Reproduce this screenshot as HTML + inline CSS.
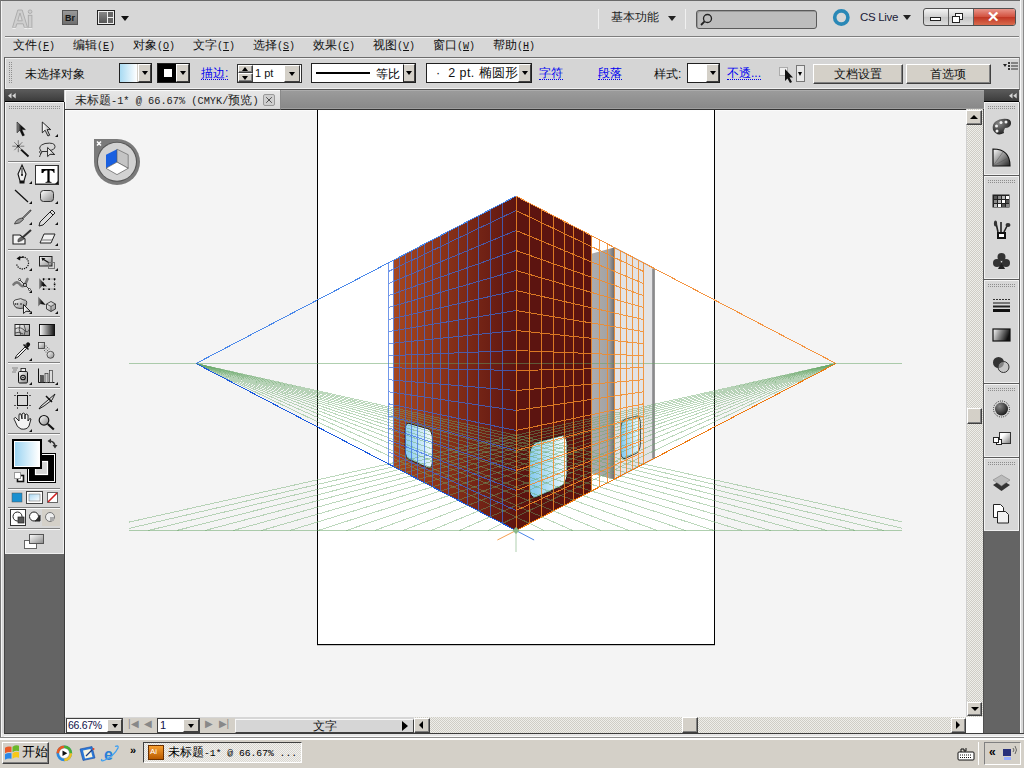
<!DOCTYPE html><html><head><meta charset="utf-8"><style>
*{box-sizing:border-box}
body{margin:0;width:1024px;height:768px;overflow:hidden;position:relative;background:#d5d5d5;font-family:"Liberation Sans",sans-serif;font-size:12px;color:#000}
.a{position:absolute}
.t{position:absolute;white-space:nowrap;line-height:1}
.lnk{color:#0000f0;border-bottom:1px dotted #0000f0}
.btn3{background:#d4d0c8;border:1px solid;border-color:#fff #404040 #404040 #fff;box-shadow:inset -1px -1px #808080}
.dd{position:absolute;background:#d4d0c8;border:1px solid;border-color:#fff #404040 #404040 #fff}
.dd:after{content:"";position:absolute;left:50%;top:50%;margin:-2px 0 0 -3px;border:3px solid transparent;border-top:4px solid #000;border-bottom:0}
.grip{position:absolute;height:4px;background:conic-gradient(#8e8e8e 25%,transparent 0) 0 0/2px 2px}
.sep{position:absolute;height:2px;background:#808080;border-bottom:1px solid #fafafa}
</style></head><body>
<div class="a" style="left:0;top:0;width:1024px;height:739px;background:#d7d7d7;border-top:1px solid #6a6a6a;border-left:1px solid #7a7a7a;box-shadow:inset 1px 0 #f4f4f4"></div><div class="a" style="left:4px;top:57px;width:1px;height:677px;background:#444"></div><div class="a" style="left:1020px;top:0;width:4px;height:739px;background:#d8d8d8;border-left:1px solid #f8f8f8;border-right:1px solid #8a8a8a"></div><svg class="a" style="left:0;top:0" width="40" height="32"><path d="M12.5 27.5L17.8 10H22.2L27.5 27.5H24.3L23.2 23.8H16.8L15.7 27.5ZM17.7 20.8H22.3L20 13Z" fill="#cecece" stroke="#a9a9a9" stroke-width="0.9" fill-rule="evenodd"/><rect x="28.3" y="15.3" width="3.6" height="12.2" fill="#cecece" stroke="#a9a9a9" stroke-width="0.9"/><rect x="28.3" y="10" width="3.6" height="3.4" rx="1.6" fill="#cecece" stroke="#a9a9a9" stroke-width="0.9"/><path d="M12.5 28.3H15.7M24.3 28.3H27.5M28.3 28.3H31.9" stroke="#f4f4f4"/></svg><div class="a" style="left:62px;top:10px;width:16px;height:15px;background:linear-gradient(#9a9a9a,#6e6e6e);border:1px solid #555"></div><div class="t" style="left:65px;top:13.5px;font-size:9px;font-weight:bold;color:#151515">Br</div><div class="a" style="left:97px;top:10px;width:18px;height:15px;border:1px solid #222;background:#eee"></div><div class="a" style="left:99px;top:12px;width:8px;height:11px;background:linear-gradient(#888,#555)"></div><div class="a" style="left:108px;top:12px;width:5px;height:5px;background:#666"></div><div class="a" style="left:108px;top:18px;width:5px;height:5px;background:#666"></div><div class="a" style="left:121px;top:16px;border:4px solid transparent;border-top:5px solid #111;border-bottom:0"></div><div class="a" style="left:598px;top:9px;width:1px;height:20px;background:#a0a0a0;border-right:1px solid #f0f0f0"></div><div class="t" style="left:611px;top:11px;font-size:12px;color:#222">基本功能</div><div class="a" style="left:668px;top:16px;border:4px solid transparent;border-top:5px solid #222;border-bottom:0"></div><div class="a" style="left:685px;top:9px;width:1px;height:20px;background:#a0a0a0;border-right:1px solid #f0f0f0"></div><div class="a" style="left:696px;top:10px;width:121px;height:19px;background:#bdbdbd;border:1px solid #5a5a5a;border-radius:3px;box-shadow:inset 1px 1px #999"></div><svg class="a" style="left:698px;top:12px" width="16" height="16"><circle cx="9.5" cy="6.5" r="4" fill="none" stroke="#222" stroke-width="1.3"/><path d="M6.6 9.4L3 13" stroke="#222" stroke-width="1.8"/></svg><svg class="a" style="left:832px;top:8px" width="19" height="19"><circle cx="9.3" cy="9.5" r="6.6" fill="none" stroke="#2a88b6" stroke-width="3.6"/></svg><div class="t" style="left:860px;top:12px;font-size:11.5px;color:#202038;letter-spacing:-0.3px">CS Live</div><div class="a" style="left:903px;top:15px;border:4px solid transparent;border-top:5px solid #222;border-bottom:0"></div><div class="a" style="left:923px;top:8px;width:93px;height:18px;border:1px solid #505050;border-radius:3px;background:linear-gradient(#f4f4f4,#d0d0d0 50%,#c4c4c4 51%,#dcdcdc)"></div><div class="a" style="left:948px;top:9px;width:1px;height:16px;background:#606060"></div><div class="a" style="left:973px;top:9px;width:1px;height:16px;background:#606060"></div><div class="a" style="left:974px;top:9px;width:41px;height:16px;border-radius:0 2px 2px 0;background:linear-gradient(#e9958a,#d2503e 50%,#c03624 51%,#d86a4c)"></div><div class="a" style="left:930px;top:17px;width:11px;height:4px;background:#fff;border:1px solid #222"></div><div class="a" style="left:955px;top:13px;width:8px;height:7px;border:1px solid #222;background:#fff"></div><div class="a" style="left:952px;top:16px;width:8px;height:7px;border:1px solid #222;background:#fff"></div><div class="t" style="left:987px;top:9px;font-size:15px;font-weight:bold;color:#fff">✕</div><div class="a" style="left:5px;top:36px;width:1014px;height:2px;background:#7e7e7e;border-bottom:1px solid #f4f4f4"></div><div class="t" style="left:13px;top:39px;font-size:12px;color:#111">文件<span style="font-family:'Liberation Mono',monospace;font-size:10px">(<u>F</u>)</span></div><div class="t" style="left:73px;top:39px;font-size:12px;color:#111">编辑<span style="font-family:'Liberation Mono',monospace;font-size:10px">(<u>E</u>)</span></div><div class="t" style="left:133px;top:39px;font-size:12px;color:#111">对象<span style="font-family:'Liberation Mono',monospace;font-size:10px">(<u>O</u>)</span></div><div class="t" style="left:193px;top:39px;font-size:12px;color:#111">文字<span style="font-family:'Liberation Mono',monospace;font-size:10px">(<u>T</u>)</span></div><div class="t" style="left:253px;top:39px;font-size:12px;color:#111">选择<span style="font-family:'Liberation Mono',monospace;font-size:10px">(<u>S</u>)</span></div><div class="t" style="left:313px;top:39px;font-size:12px;color:#111">效果<span style="font-family:'Liberation Mono',monospace;font-size:10px">(<u>C</u>)</span></div><div class="t" style="left:373px;top:39px;font-size:12px;color:#111">视图<span style="font-family:'Liberation Mono',monospace;font-size:10px">(<u>V</u>)</span></div><div class="t" style="left:433px;top:39px;font-size:12px;color:#111">窗口<span style="font-family:'Liberation Mono',monospace;font-size:10px">(<u>W</u>)</span></div><div class="t" style="left:493px;top:39px;font-size:12px;color:#111">帮助<span style="font-family:'Liberation Mono',monospace;font-size:10px">(<u>H</u>)</span></div><div class="a" style="left:4px;top:57px;width:1016px;height:33px;background:#d5d5d5;border:1px solid #6c6c6c;border-color:#6c6c6c #8c8c8c #555 #5a5a5a;box-shadow:inset 1px 1px #f0f0f0,inset 0 -1px #f0f0f0"></div><div class="grip" style="left:8px;top:62px;width:4px;height:22px"></div><div class="t" style="left:25px;top:68px;font-size:12px;color:#111">未选择对象</div><div class="a" style="left:119px;top:63px;width:33px;height:20px;border:1px solid #202020;background:linear-gradient(90deg,#a8daf2,#fff 55%,#d4d0c8 55%)"></div><div class="dd" style="left:138px;top:64px;width:13px;height:18px"></div><div class="a" style="left:157px;top:63px;width:33px;height:20px;border:1px solid #202020;background:#000"></div><div class="a" style="left:164px;top:69px;width:8px;height:8px;background:#fff"></div><div class="dd" style="left:176px;top:64px;width:13px;height:18px"></div><div class="t lnk" style="left:201px;top:67px;font-size:12px">描边:</div><div class="a" style="left:237px;top:64px;width:65px;height:19px;border:1px solid #303030;background:#fff"></div><div class="btn3 a" style="left:238px;top:65px;width:15px;height:8px"></div><div class="btn3 a" style="left:238px;top:73px;width:15px;height:9px"></div><div class="a" style="left:242px;top:67px;border:3px solid transparent;border-bottom:4px solid #000;border-top:0"></div><div class="a" style="left:242px;top:76px;border:3px solid transparent;border-top:4px solid #000;border-bottom:0"></div><div class="t" style="left:255px;top:68px;font-size:11px;color:#111">1 pt</div><div class="dd" style="left:284px;top:65px;width:16px;height:17px"></div><div class="a" style="left:311px;top:63px;width:105px;height:20px;border:1px solid #202020;background:#fff"></div><div class="a" style="left:316px;top:72px;width:54px;height:2px;background:#000"></div><div class="t" style="left:376px;top:68px;font-size:12px">等比</div><div class="dd" style="left:403px;top:64px;width:12px;height:18px;border-left:1px solid #222"></div><div class="a" style="left:426px;top:63px;width:106px;height:20px;border:1px solid #202020;background:#fff"></div><div class="t" style="left:436px;top:67px;font-size:12.5px;color:#111;letter-spacing:0.4px">·&nbsp; 2 pt. 椭圆形</div><div class="dd" style="left:518px;top:64px;width:13px;height:18px"></div><div class="t lnk" style="left:539px;top:67px;font-size:12px">字符</div><div class="t lnk" style="left:598px;top:67px;font-size:12px">段落</div><div class="t" style="left:654px;top:68px;font-size:12px;color:#111">样式:</div><div class="a" style="left:687px;top:63px;width:33px;height:20px;border:1px solid #202020;background:#fff"></div><div class="dd" style="left:706px;top:64px;width:13px;height:18px"></div><div class="t lnk" style="left:727px;top:67px;font-size:12px">不透...</div><svg class="a" style="left:778px;top:64px" width="18" height="20"><rect x="1.5" y="3.5" width="8" height="8" fill="#eee" stroke="#777" stroke-dasharray="1 1"/><path d="M7 5L7 17L9.5 14.5L12 19L14 18L11.5 13.5L15 13.5Z" fill="#111"/></svg><div class="a" style="left:796px;top:65px;width:9px;height:17px;border:1px solid #777;background:#e8e8e8"></div><div class="a" style="left:798px;top:72px;border:2.5px solid transparent;border-top:4px solid #000;border-bottom:0"></div><div class="btn3 a" style="left:813px;top:64px;width:90px;height:20px"></div><div class="t" style="left:834px;top:68px;font-size:12px;color:#111">文档设置</div><div class="btn3 a" style="left:906px;top:64px;width:85px;height:20px"></div><div class="t" style="left:930px;top:68px;font-size:12px;color:#111">首选项</div><svg class="a" style="left:1003px;top:61px" width="16" height="9"><path d="M0 3h4l-2 3z" fill="#222"/><path d="M5 1h2v2h-2zM5 4h2v2h-2zM5 7h2v2h-2zM8 1.5h7v1h-7zM8 4.5h7v1h-7zM8 7.5h7v1h-7z" fill="#333"/></svg><div class="a" style="left:5px;top:90px;width:59px;height:12px;background:linear-gradient(#5a5a5a,#3c3c3c);border-bottom:1px solid #000"></div><svg class="a" style="left:7.5px;top:93px" width="8" height="6"><path d="M0 2.75L3.5 0V5.5ZM4.2 2.75L7.7 0V5.5Z" fill="#d4d4d4"/></svg><div class="a" style="left:5px;top:102px;width:60px;height:452px;background:#d7d7d7;border-right:1px solid #3c3c3c;box-shadow:inset 1px 1px #f4f4f4,inset -1px -1px #f0f0f0"></div><div class="a" style="left:5px;top:554px;width:60px;height:180px;background:#646464;border-right:1px solid #3c3c3c"></div><div class="grip" style="left:8px;top:106px;width:52px"></div><div class="sep" style="left:8px;top:161px;width:52px"></div><div class="sep" style="left:8px;top:249px;width:52px"></div><div class="sep" style="left:8px;top:316px;width:52px"></div><div class="sep" style="left:8px;top:362px;width:52px"></div><div class="sep" style="left:8px;top:387px;width:52px"></div><div class="sep" style="left:8px;top:433px;width:52px"></div><div class="sep" style="left:8px;top:488px;width:52px"></div><div class="sep" style="left:8px;top:507px;width:52px"></div><div class="sep" style="left:8px;top:528px;width:52px"></div><div class="a" style="left:35px;top:165px;width:24px;height:20px;background:#fff;border:1px solid #333;box-shadow:inset -1px -1px #999"></div><svg class="a" style="left:0;top:0" width="70" height="560" viewBox="0 0 70 560"><defs><linearGradient id="tg1" x1="0" y1="0" x2="1" y2="1"><stop offset="0" stop-color="#fff"/><stop offset="1" stop-color="#8a8a8a"/></linearGradient><linearGradient id="tg2" x1="0" y1="0" x2="1" y2="0"><stop offset="0" stop-color="#fff"/><stop offset="1" stop-color="#111"/></linearGradient><linearGradient id="tg3" x1="0" y1="0" x2="1" y2="1"><stop offset="0" stop-color="#a8d8f4"/><stop offset="1" stop-color="#fff"/></linearGradient><linearGradient id="tg4" x1="0" y1="0" x2="1" y2="0"><stop offset="0" stop-color="#9cd4f2"/><stop offset="1" stop-color="#fff"/></linearGradient><linearGradient id="tg5" x1="0" y1="0" x2="1" y2="0"><stop offset="0" stop-color="#999"/><stop offset="0.5" stop-color="#111"/></linearGradient><linearGradient id="tg6" x1="0" y1="0" x2="1" y2="0"><stop offset="0" stop-color="#fff"/><stop offset="1" stop-color="#aaa"/></linearGradient></defs><path d="M17 122L17 132.8L19.8 130.2L22.6 136L24.4 135.2L21.8 129.6L25.4 129.6Z" fill="url(#tg5)" stroke="#000" stroke-width="0.5"/><path d="M42.3 122L42.3 132.8L45.1 130.2L47.9 136L49.7 135.2L47.1 129.6L50.7 129.6Z" fill="url(#tg6)" stroke="#000" stroke-width="0.8"/><path d="M55 137h3v-3z" fill="#111"/><path d="M21 149.5L28.5 156.5" stroke="#111" stroke-width="1.8"/><circle cx="18.3" cy="146.2" r="2.5" fill="#f4f4f4"/><path d="M12.3 146.2h12M18.3 140.2v12M14.3 142.2l8 8M22.3 142.2l-8 8" stroke="#555" stroke-width="0.7"/><path d="M16.8 144.7l3 3M19.8 144.7l-3 3" stroke="#111" stroke-width="1"/><path d="M41 151Q37 146 45 143.5Q55 142 55 146.5Q55 150 49 150.5" fill="none" stroke="#222" stroke-width="0.9"/><path d="M40.5 150.5q-2 1.5 0 3q2 0 1 -2M41 153.5q-1 2 -1.5 3.5M41.5 151.5h6" fill="none" stroke="#222" stroke-width="0.9"/><path d="M47.6 147.5L47.6 156.5L50 154.3L54.7 154.5Z" fill="url(#tg6)" stroke="#111" stroke-width="0.9"/><path d="M22 165L26 174L24 181H20L18 174Z" fill="#eee" stroke="#111" stroke-width="1.1"/><path d="M22 168V175" stroke="#111"/><circle cx="22" cy="175" r="1" fill="#111"/><rect x="19.5" y="181" width="5" height="2.5" fill="#111"/><path d="M29 184h3v-3z" fill="#111"/><path d="M41.5 169H54.5V173H53.8Q53.5 170.5 51 170.5H49.6V181.2Q49.6 182 51.5 182V182.8H45.5V182Q47.4 182 47.4 181.2V170.5H46Q43.5 170.5 43.2 173H41.5Z" fill="#000"/><path d="M55 184h3v-3z" fill="#111"/><path d="M15 190L28 202" stroke="#111" stroke-width="1.3"/><path d="M29 204h3v-3z" fill="#111"/><rect x="40.5" y="190.5" width="13" height="11" rx="3" fill="url(#tg1)" stroke="#333" stroke-width="1"/><path d="M55 204h3v-3z" fill="#111"/><path d="M31 210L22 219" stroke="#222" stroke-width="1.6"/><path d="M30.5 210.5L22.5 218.5" stroke="#ccc" stroke-width="0.5"/><path d="M22 218Q16 219 14.5 224Q20 224 23.5 219.5Z" fill="#999" stroke="#222" stroke-width="0.7"/><path d="M29 225h3v-3z" fill="#111"/><path d="M52 210L55 213L43 225L39 226L40 222Z" fill="#ddd" stroke="#222" stroke-width="1"/><path d="M50 212L53 215" stroke="#222"/><path d="M55 225h3v-3z" fill="#111"/><path d="M13 235H20L25 239V244H13Z" fill="#f4f4f4" stroke="#222" stroke-width="1.1"/><path d="M31 230L22 238" stroke="#333" stroke-width="2"/><path d="M22 237Q17 238 18 242Q22 241 24 239Z" fill="#666" stroke="#222" stroke-width="0.5"/><path d="M44 234H55L51 243H40Z" fill="#f0f0f0" stroke="#222" stroke-width="1"/><path d="M41 240H52" stroke="#777"/><path d="M55 246h3v-3z" fill="#111"/><path d="M18.5 258.5A6 6 0 1 1 16.6 264" fill="none" stroke="#111" stroke-width="1.4" stroke-dasharray="0.1 2.2" stroke-linecap="round"/><path d="M19 258.5Q21 256.8 24 257.2" fill="none" stroke="#111" stroke-width="1.2"/><path d="M16.5 258.5L20 256L20.2 260.5Z" fill="#111"/><path d="M29 271h3v-3z" fill="#111"/><rect x="39.5" y="256.5" width="12.5" height="9.5" fill="url(#tg1)" stroke="#222"/><rect x="48.5" y="262.5" width="6" height="6" fill="none" stroke="#777" stroke-width="1"/><path d="M42 258.5L48.5 262.5" stroke="#111" stroke-width="1.1"/><path d="M41.5 257.8L45.5 258.3L42.5 261Z" fill="#111"/><path d="M55 271h3v-3z" fill="#111"/><path d="M13.5 284.5Q17 280 20.5 285Q24 289 27.5 279" fill="none" stroke="#777" stroke-width="2.6" stroke-linecap="round"/><path d="M19.5 279.5L29.5 289.5" stroke="#111" stroke-width="0.8"/><circle cx="19.5" cy="279.5" r="1" fill="#fff" stroke="#111" stroke-width="0.7"/><circle cx="25" cy="285" r="1.5" fill="#fff" stroke="#111" stroke-width="0.9"/><circle cx="29.5" cy="289.5" r="1" fill="#fff" stroke="#111" stroke-width="0.7"/><path d="M29 293h3v-3z" fill="#111"/><rect x="43.5" y="279" width="11" height="10" fill="none" stroke="#333" stroke-width="0.6" stroke-dasharray="1 1"/><path d="M42.8 278.3h1.6v1.6h-1.6zM48.3 278.3h1.6v1.6h-1.6zM53.8 278.3h1.6v1.6h-1.6zM53.8 283.6h1.6v1.6h-1.6zM42.8 288.5h1.6v1.6h-1.6zM48.3 288.5h1.6v1.6h-1.6zM53.8 288.5h1.6v1.6h-1.6z" fill="#000"/><path d="M39 278L39 289.5L42 286L47 286.5Z" fill="url(#tg5)"/><path d="M14 305Q12 300 17 299.5Q21 297.5 24 300Q27.5 300 26.5 304Q26 308.5 20 308.5Q15 308.5 14 305Z" fill="url(#tg1)" stroke="#333" stroke-width="0.9"/><circle cx="15.5" cy="304" r="0.8" fill="#111"/><circle cx="17.5" cy="304" r="0.8" fill="#111"/><circle cx="21" cy="304" r="0.8" fill="#111"/><path d="M23.5 304.5L23.5 313.5L26 311.3L30.5 311.5Z" fill="url(#tg6)" stroke="#111" stroke-width="0.9"/><path d="M29 314h3v-3z" fill="#111"/><path d="M38 296.5L38 306.5L40.5 304L45.8 305Z" fill="url(#tg5)"/><path d="M46.5 304L51 301.5L55.5 304V309L51 311.5L46.5 309Z" fill="url(#tg1)" stroke="#333" stroke-width="0.9"/><path d="M46.5 304L51 306.5L55.5 304M51 306.5V311.5" fill="none" stroke="#333" stroke-width="0.7"/><path d="M55 314h3v-3z" fill="#111"/><rect x="15" y="324.5" width="14.5" height="11" fill="url(#tg1)" stroke="#222"/><path d="M15 329Q20 326 24 330T29.5 329M15 333Q19 331 23 334M20 324.5Q18 329 21 335.5M24 324.5Q27 330 24 335.5" fill="none" stroke="#333" stroke-width="0.8"/><rect x="39.5" y="324.5" width="15" height="11" fill="url(#tg2)" stroke="#111"/><path d="M26 343.5Q28 341.5 29.5 343Q31 344.5 29 346.5L27.5 348L24.5 345Z" fill="url(#tg5)"/><path d="M23.5 344.5L28.5 349.5" stroke="#111" stroke-width="1.4"/><path d="M25 347L16.5 355.5L15 358.5L18 357L26.5 348.5Z" fill="#f0f0f0" stroke="#111" stroke-width="0.9"/><path d="M29 361h3v-3z" fill="#111"/><rect x="38.5" y="342.5" width="6" height="6" fill="url(#tg1)" stroke="#333" stroke-width="0.8"/><circle cx="50.5" cy="354.8" r="3.5" fill="url(#tg1)" stroke="#333" stroke-width="0.8"/><path d="M45.5 346h1M47 347.5h1M45.5 349h1M48.5 349h1M44 350.5h1M47 350.5h1M45.5 352h1" stroke="#666"/><rect x="18.5" y="371.5" width="9" height="11.5" rx="1.2" fill="url(#tg1)" stroke="#111"/><circle cx="23" cy="377.5" r="2.3" fill="none" stroke="#111" stroke-width="1.1"/><circle cx="23" cy="377.5" r="0.8" fill="#111"/><rect x="21" y="368.5" width="4.5" height="3" fill="#eee" stroke="#111" stroke-width="0.8"/><path d="M12.5 368h1M14.5 368h1M16.5 368h1M13.5 370h1M15.5 370h1M12.5 372h1M14.5 372h1" stroke="#333"/><path d="M29 385h3v-3z" fill="#111"/><path d="M38.5 368.5V382.5H54.5" fill="none" stroke="#111" stroke-width="1"/><rect x="40.5" y="375.5" width="3" height="7" fill="#555" stroke="#222" stroke-width="0.5"/><rect x="45" y="373.5" width="3" height="9" fill="#ccc" stroke="#222" stroke-width="0.6"/><rect x="49.5" y="370.5" width="3" height="12" fill="#ddd" stroke="#222" stroke-width="0.6"/><path d="M55 385h3v-3z" fill="#111"/><rect x="17.5" y="395.5" width="10" height="10" fill="none" stroke="#111"/><path d="M14 395.5h2M14 405.5h2M29 395.5h2M29 405.5h2M17.5 392v2M27.5 392v2M17.5 407v2M27.5 407v2" stroke="#555"/><path d="M55 394L41 406L39 409L44 406L52 400Z" fill="#ddd" stroke="#111" stroke-width="0.9"/><path d="M46 396L52 402" stroke="#111" stroke-width="1.5"/><path d="M55 411h3v-3z" fill="#111"/><path d="M15 421Q13 418 15.5 417.5L19 421V415Q19 413 21 414L22 419V414Q23 412 25 414L25 419V415Q26 413 28 415L28 421Q30 417 31 419L29 426Q27 430 21 429Q17 428 15 421Z" fill="#f4f4f4" stroke="#111" stroke-width="0.9"/><path d="M29 432h3v-3z" fill="#111"/><circle cx="44" cy="420.3" r="4.8" fill="url(#tg1)" stroke="#111" stroke-width="1.2"/><path d="M47.8 424L53.8 429.5" stroke="#111" stroke-width="2.2"/><rect x="27" y="453" width="29" height="30" fill="#000"/><rect x="28.5" y="454.5" width="26" height="27" fill="none" stroke="#fff" stroke-width="1"/><rect x="35.5" y="461.5" width="12" height="13" fill="#d4d4d4" stroke="#fff" stroke-width="1.2"/><rect x="12" y="439" width="30" height="30" fill="#000"/><rect x="14" y="441" width="26" height="26" fill="#fff"/><rect x="15" y="442" width="24" height="24" fill="url(#tg4)"/><path d="M49 441Q55 441 55 447" fill="none" stroke="#333" stroke-width="1.6"/><path d="M47.5 441L51 438.5V443.5Z M55 448.5L52.5 445H57.5Z" fill="#333"/><rect x="17.5" y="475.5" width="6" height="6" fill="#fff" stroke="#111" stroke-width="1.6"/><rect x="14.5" y="472.5" width="6" height="6" fill="#fff" stroke="#999"/><rect x="12" y="493" width="10" height="9" fill="#1a90d0" stroke="#555" stroke-width="0.5"/><rect x="26.5" y="491.5" width="16" height="12" fill="#fff" stroke="#444"/><rect x="29" y="494" width="11" height="7" fill="url(#tg3)" stroke="#777" stroke-width="0.6"/><rect x="47.5" y="492.5" width="10" height="10" fill="#fff" stroke="#666"/><path d="M48 502L57 493" stroke="#d02020" stroke-width="1.6"/><rect x="10.5" y="509.5" width="15" height="16" fill="#fff" stroke="#333"/><rect x="42" y="509" width="18" height="17" fill="#d4d0c8"/><circle cx="17.5" cy="516.5" r="4.5" fill="#fff" stroke="#222"/><rect x="18" y="517" width="6" height="6" fill="#555" stroke="#222" stroke-width="0.7"/><circle cx="34" cy="516.5" r="4.5" fill="#fff" stroke="#222"/><path d="M35 521H40V515" fill="#333" stroke="#222"/><circle cx="50" cy="517" r="4.5" fill="#eee" stroke="#777"/><path d="M50 517h4v4h-4z" fill="#aaa"/><rect x="24.5" y="540.5" width="12" height="8" fill="#fff" stroke="#666"/><rect x="29.5" y="534.5" width="14" height="9" fill="url(#tg1)" stroke="#555"/></svg><div class="a" style="left:984px;top:90px;width:35px;height:12px;background:linear-gradient(#5a5a5a,#3c3c3c);border-bottom:1px solid #000"></div><div class="a" style="left:983px;top:90px;width:1px;height:643px;background:#505050"></div><svg class="a" style="left:1008.8px;top:93px" width="8" height="6"><path d="M0 2.75L3.5 0V5.5ZM4.2 2.75L7.7 0V5.5Z" fill="#d4d4d4"/></svg><div class="a" style="left:983px;top:102px;width:37px;height:429px;background:#5a5a5a"></div><div class="a" style="left:984px;top:102px;width:35px;height:73px;background:#d7d7d7;box-shadow:inset 1px 1px #f4f4f4,inset -1px -1px #f0f0f0"></div><div class="grip" style="left:987px;top:106px;width:28px"></div><div class="a" style="left:984px;top:176px;width:35px;height:103px;background:#d7d7d7;box-shadow:inset 1px 1px #f4f4f4,inset -1px -1px #f0f0f0"></div><div class="grip" style="left:987px;top:180px;width:28px"></div><div class="a" style="left:984px;top:280px;width:35px;height:103px;background:#d7d7d7;box-shadow:inset 1px 1px #f4f4f4,inset -1px -1px #f0f0f0"></div><div class="grip" style="left:987px;top:284px;width:28px"></div><div class="a" style="left:984px;top:384px;width:35px;height:73px;background:#d7d7d7;box-shadow:inset 1px 1px #f4f4f4,inset -1px -1px #f0f0f0"></div><div class="grip" style="left:987px;top:388px;width:28px"></div><div class="a" style="left:984px;top:458px;width:35px;height:73px;background:#d7d7d7;box-shadow:inset 1px 1px #f4f4f4,inset -1px -1px #f0f0f0"></div><div class="grip" style="left:987px;top:462px;width:28px"></div><div class="a" style="left:984px;top:531px;width:36px;height:203px;background:#646464"></div><svg class="a" style="left:980px;top:100px" width="44" height="440" viewBox="980 100 44 440"><defs><radialGradient id="dg1" cx="0.35" cy="0.3" r="0.8"><stop offset="0" stop-color="#888"/><stop offset="1" stop-color="#111"/></radialGradient><linearGradient id="dg2" x1="0" y1="0" x2="1" y2="1"><stop offset="0" stop-color="#fff"/><stop offset="1" stop-color="#222"/></linearGradient><linearGradient id="dg3" x1="0" y1="0" x2="1" y2="1"><stop offset="0.3" stop-color="#fff"/><stop offset="1" stop-color="#777"/></linearGradient><linearGradient id="dg4" x1="0" y1="0" x2="1" y2="0.3"><stop offset="0" stop-color="#fff"/><stop offset="1" stop-color="#111"/></linearGradient></defs><path d="M993 130Q991 121 1002 119Q1012 118 1011 124Q1010 128 1005 128Q1003 131 1004 133Q997 137 993 130Z" fill="url(#dg1)"/><circle cx="997" cy="131" r="1.5" fill="#eee"/><circle cx="996.5" cy="126" r="1.5" fill="#eee"/><circle cx="1001" cy="122.5" r="1.5" fill="#eee"/><circle cx="1006" cy="122" r="1.5" fill="#eee"/><path d="M993 149V166H1010Q1010 149 993 149Z" fill="url(#dg2)" stroke="#111" stroke-width="1.2"/><path d="M993 166L1003 152M993 166L1008 158" stroke="#555" stroke-width="0.5"/><rect x="992.5" y="194.5" width="17" height="13" fill="#222"/><rect x="994" y="196" width="3" height="3" fill="#555"/><rect x="994" y="200" width="3" height="3" fill="#888"/><rect x="994" y="204" width="3" height="3" fill="#bbb"/><rect x="998" y="196" width="3" height="3" fill="#888"/><rect x="998" y="200" width="3" height="3" fill="#bbb"/><rect x="998" y="204" width="3" height="3" fill="#fff"/><rect x="1002" y="196" width="3" height="3" fill="#bbb"/><rect x="1002" y="200" width="3" height="3" fill="#fff"/><rect x="1002" y="204" width="3" height="3" fill="#555"/><rect x="1006" y="196" width="3" height="3" fill="#fff"/><rect x="1006" y="200" width="3" height="3" fill="#555"/><rect x="1006" y="204" width="3" height="3" fill="#888"/><path d="M997 232h9v7h-9z" fill="#111"/><rect x="999" y="234" width="5" height="3" fill="#fff"/><path d="M998 232L996 223M1001 232V222M1004 232L1008 224" stroke="#222" stroke-width="1.6"/><ellipse cx="995.5" cy="223.5" rx="1.6" ry="3" fill="#333"/><ellipse cx="1008" cy="225" rx="2.5" ry="2" fill="#333"/><circle cx="1001.5" cy="257" r="4" fill="#333"/><circle cx="997" cy="263" r="4" fill="#333"/><circle cx="1006" cy="263" r="4" fill="#333"/><path d="M1001.5 262L998 269H1005Z" fill="#222"/><path d="M993 299.5h17" stroke="#333" stroke-dasharray="2 1"/><path d="M993 303h17" stroke="#333" stroke-width="1.2"/><path d="M993 306.5h17" stroke="#222" stroke-width="2"/><path d="M993 310.5h17" stroke="#111" stroke-width="3"/><rect x="993" y="329" width="17" height="12" fill="url(#dg4)" stroke="#111" stroke-width="1.2"/><circle cx="998.5" cy="362.5" r="5.5" fill="#333"/><circle cx="1003.5" cy="367" r="5.5" fill="#bbb" fill-opacity="0.6" stroke="#333" stroke-width="1"/><circle cx="1001.5" cy="409" r="8" fill="none" stroke="#333" stroke-dasharray="1 1"/><circle cx="1001.5" cy="409" r="6.5" fill="url(#dg1)"/><rect x="999.5" y="432.5" width="11" height="11" fill="url(#dg3)" stroke="#333"/><rect x="996.5" y="439.5" width="5" height="5" fill="#fff" stroke="#222"/><rect x="993.5" y="437.5" width="5" height="5" fill="#fff" stroke="#222"/><path d="M993 485L1001.5 480L1010 485L1001.5 491Z" fill="#333"/><path d="M993 480L1001.5 475L1010 480L1001.5 486Z" fill="#bbb" stroke="#777" stroke-width="0.5"/><path d="M993.5 504.5h7l3 3v10h-10z" fill="#fff" stroke="#222"/><path d="M997.5 511.5h8l3 3v8.5h-11z" fill="#f0f0f0" stroke="#222"/></svg><div class="a" style="left:65px;top:90px;width:919px;height:20px;background:linear-gradient(#9c9c9c,#888);border-bottom:1px solid #333;box-shadow:inset 0 1px #acacac,inset 0 -1px #9e9e9e"></div><div class="a" style="left:65px;top:90px;width:216px;height:20px;background:linear-gradient(#e8e8e8,#d8d8d8);border-right:1px solid #8a8a8a;border-bottom:1px solid #3a3a3a;box-shadow:inset 1px 1px #fafafa"></div><div class="t" style="left:75px;top:94px;font-size:12px;color:#222">未标题<span style="font-family:'Liberation Mono',monospace;font-size:10.3px">-1*&nbsp;@&nbsp;66.67%&nbsp;(CMYK/</span>预览<span style="font-family:'Liberation Mono',monospace;font-size:10.3px">)</span></div><div class="a" style="left:263px;top:94px;width:12px;height:12px;border:1px solid #9a9a9a;border-radius:2px;background:#cfcfcf"></div><svg class="a" style="left:263px;top:94px" width="12" height="12"><path d="M3.2 3.2L8.8 8.8M8.8 3.2L3.2 8.8" stroke="#444" stroke-width="0.9"/></svg><div class="a" style="left:65px;top:110px;width:901px;height:607px;background:#f4f4f4;overflow:hidden;box-shadow:inset 1px 1px #fafafa"><div class="a" style="left:252px;top:-3px;width:398px;height:538px;background:#fff;border:1px solid #000;box-shadow:0 1px 0 #c4c4c4"></div></div><svg class="a" style="left:0;top:0" width="1024" height="768" viewBox="0 0 1024 768"><defs><clipPath id="cc"><rect x="66" y="110" width="900" height="607"/></clipPath></defs><g clip-path="url(#cc)"><defs>
<linearGradient id="lfg" x1="393.7" y1="0" x2="516.0" y2="0" gradientUnits="userSpaceOnUse"><stop offset="0" stop-color="#a6461f"/><stop offset="1" stop-color="#5e1511"/></linearGradient>
<linearGradient id="wg" x1="0" y1="0.2" x2="1" y2="0"><stop offset="0" stop-color="#8ccdf0"/><stop offset="1" stop-color="#ffffff"/></linearGradient>
<linearGradient id="gfd" x1="0" y1="0" x2="1" y2="0"><stop offset="0" stop-color="#b4b4b6"/><stop offset="0.85" stop-color="#a2a2a4"/><stop offset="1" stop-color="#6e6e70"/></linearGradient>
</defs>
<path d="M614.08 479.32L578.87 469.56L578.87 257.18L614.08 247.41Z" fill="url(#gfd)"/>
<path d="M614.08 479.32L654.20 458.38L654.20 268.39L614.08 247.41Z" fill="#e3e3e5" stroke="#707072" stroke-width="1"/>
<path d="M653.20 458.38L653.20 268.39" stroke="#8a8a8c" stroke-width="2"/>
<path d="M516.00 530.50L393.69 466.67L393.69 260.08L516.00 196.10Z" fill="url(#lfg)"/>
<path d="M516.00 530.50L591.61 491.04L591.61 235.65L516.00 196.10Z" fill="#5c1410"/>
<path d="M405.11 430.15L405.23 428.16L405.59 426.38L406.17 424.92L406.93 423.88L407.83 423.35L408.79 423.35L427.87 428.71L429.03 429.34L430.12 430.52L431.07 432.19L431.80 434.24L432.26 436.51L432.41 438.86L432.41 461.02L432.26 463.25L431.80 465.19L431.07 466.70L430.12 467.68L429.03 468.07L427.87 467.84L408.79 459.26L407.83 458.55L406.93 457.36L406.17 455.77L405.59 453.89L405.23 451.84L405.11 449.76Z" fill="url(#wg)" stroke="#241818" stroke-width="1"/>
<path d="M567.10 444.17L566.90 441.62L566.30 439.35L565.33 437.52L564.07 436.25L562.58 435.62L560.97 435.69L537.13 441.95L535.21 442.84L533.39 444.46L531.81 446.69L530.58 449.40L529.81 452.39L529.54 455.44L529.54 488.96L529.81 491.82L530.58 494.26L531.81 496.10L533.39 497.21L535.21 497.53L537.13 497.06L560.97 486.40L562.58 485.33L564.07 483.65L565.33 481.48L566.30 478.97L566.90 476.28L567.10 473.58Z" fill="url(#wg)" stroke="#241818" stroke-width="1"/>
<path d="M640.40 423.65L640.27 421.47L639.90 419.51L639.31 417.90L638.53 416.74L637.61 416.12L636.63 416.09L625.07 419.13L623.95 419.74L622.89 420.96L621.98 422.69L621.28 424.83L620.83 427.23L620.68 429.71L620.68 450.98L620.83 453.35L621.28 455.43L621.98 457.07L622.89 458.15L623.95 458.61L625.07 458.42L636.63 453.22L637.61 452.48L638.53 451.20L639.31 449.49L639.90 447.46L640.27 445.23L640.40 442.96Z" fill="url(#wg)" stroke="#3a3a3a" stroke-width="1"/>
<g stroke="#6aa86a" stroke-width="1" fill="none" stroke-opacity="0.45" shape-rendering="crispEdges"><path d="M196.00 363.50L516.00 530.50"/><path d="M836.00 363.50L516.00 530.50"/><path d="M196.00 363.50L544.28 530.50"/><path d="M836.00 363.50L487.72 530.50"/><path d="M196.00 363.50L572.57 530.50"/><path d="M836.00 363.50L459.43 530.50"/><path d="M196.00 363.50L600.85 530.50"/><path d="M836.00 363.50L431.15 530.50"/><path d="M196.00 363.50L629.14 530.50"/><path d="M836.00 363.50L402.86 530.50"/><path d="M196.00 363.50L657.42 530.50"/><path d="M836.00 363.50L374.58 530.50"/><path d="M196.00 363.50L685.71 530.50"/><path d="M836.00 363.50L346.29 530.50"/><path d="M196.00 363.50L713.99 530.50"/><path d="M836.00 363.50L318.01 530.50"/><path d="M196.00 363.50L742.27 530.50"/><path d="M836.00 363.50L289.73 530.50"/><path d="M196.00 363.50L770.56 530.50"/><path d="M836.00 363.50L261.44 530.50"/><path d="M196.00 363.50L798.84 530.50"/><path d="M836.00 363.50L233.16 530.50"/><path d="M196.00 363.50L827.13 530.50"/><path d="M836.00 363.50L204.87 530.50"/><path d="M196.00 363.50L855.41 530.50"/><path d="M836.00 363.50L176.59 530.50"/><path d="M196.00 363.50L883.70 530.50"/><path d="M836.00 363.50L148.30 530.50"/><path d="M196.00 363.50L902.00 528.17"/><path d="M836.00 363.50L129.00 528.41"/><path d="M196.00 363.50L902.00 521.91"/><path d="M836.00 363.50L129.00 522.14"/></g>
<path d="M129 363.5H902M129 530.5H902M516 530.5V552" stroke="#60a060" stroke-opacity="0.5" stroke-width="1" fill="none"/>
<path d="M502.46 523.43L502.46 203.18M490.01 516.94L490.01 209.69M478.54 510.95L478.54 215.70M467.93 505.41L467.93 221.25M458.09 500.28L458.09 226.40M448.93 495.50L448.93 231.19M440.39 491.04L440.39 235.65M432.41 486.88L432.41 239.83M424.94 482.98L424.94 243.74M417.92 479.32L417.92 247.41M411.32 475.87L411.32 250.86M405.11 472.63L405.11 254.11M399.24 469.56L399.24 257.18M393.69 466.67L393.69 260.08M388.43 463.93L388.43 262.83M516.00 510.50L388.43 451.90M516.00 490.50L388.43 439.87M516.00 470.50L388.43 427.84M516.00 450.50L388.43 415.82M516.00 430.50L388.43 403.79M516.00 410.50L388.43 391.76M516.00 390.50L388.43 379.74M516.00 370.50L388.43 367.71M516.00 350.50L388.43 355.68M516.00 330.50L388.43 343.66M516.00 310.50L388.43 331.63M516.00 290.50L388.43 319.60M516.00 270.50L388.43 307.57M516.00 250.50L388.43 295.55M516.00 230.50L388.43 283.52M516.00 210.50L388.43 271.49" stroke="#3a6fe0" stroke-width="1" fill="none" opacity="0.72" shape-rendering="crispEdges"/>
<path d="M516.00 196.10L196.00 363.50" stroke="#4a88ea" stroke-width="1" fill="none" shape-rendering="crispEdges"/>
<path d="M516.00 530.50L196.00 363.50" stroke="#1a5ade" stroke-width="1" fill="none" shape-rendering="crispEdges"/>
<path d="M529.54 523.43L529.54 203.18M541.99 516.94L541.99 209.69M553.46 510.95L553.46 215.70M564.07 505.41L564.07 221.25M573.91 500.28L573.91 226.40M583.07 495.50L583.07 231.19M591.61 491.04L591.61 235.65M599.59 486.88L599.59 239.83M607.06 482.98L607.06 243.74M614.08 479.32L614.08 247.41M620.68 475.87L620.68 250.86M626.89 472.63L626.89 254.11M632.76 469.56L632.76 257.18M638.31 466.67L638.31 260.08M643.57 463.93L643.57 262.83M516.00 510.50L643.57 451.90M516.00 490.50L643.57 439.87M516.00 470.50L643.57 427.84M516.00 450.50L643.57 415.82M516.00 430.50L643.57 403.79M516.00 410.50L643.57 391.76M516.00 390.50L643.57 379.74M516.00 370.50L643.57 367.71M516.00 350.50L643.57 355.68M516.00 330.50L643.57 343.66M516.00 310.50L643.57 331.63M516.00 290.50L643.57 319.60M516.00 270.50L643.57 307.57M516.00 250.50L643.57 295.55M516.00 230.50L643.57 283.52M516.00 210.50L643.57 271.49M516.00 530.50L516.00 196.10" stroke="#f28a28" stroke-width="1" fill="none" opacity="0.85" shape-rendering="crispEdges"/>
<path d="M516.00 196.10L836.00 363.50" stroke="#f49440" stroke-width="1" fill="none" shape-rendering="crispEdges"/>
<path d="M516.00 530.50L836.00 363.50" stroke="#ee7a10" stroke-width="1" fill="none" shape-rendering="crispEdges"/>
<path d="M516 530.5L497.4 540" stroke="#f5a050" stroke-width="1" fill="none"/>
<path d="M516 530.5L534.1 540" stroke="#4a86e8" stroke-width="1" fill="none"/>
<path d="M516 527L519.5 530.5L516 534L512.5 530.5Z" fill="#88b888"/></g></svg><svg class="a" style="left:88px;top:132px" width="60" height="60"><path d="M6 7H29A23 23 0 1 1 6 30Z" fill="#7a7a7a"/><circle cx="29" cy="29.7" r="20" fill="#555"/><circle cx="29" cy="29.7" r="19" fill="#d2d2d2"/><path d="M18 22.7L29 17.2V30.1L18 36.3Z" fill="#1a60e0"/><path d="M29 17.2L40.2 22.7V36.3L29 30.1Z" fill="#c4c4c4" stroke="#555" stroke-width="0.6"/><path d="M18 36.3L29 30.1L40.2 36.3L29 42.6Z" fill="#fff" stroke="#444" stroke-width="0.6"/><path d="M9 9.5L13 13.5M13 9.5L9 13.5" stroke="#fff" stroke-width="1.6"/></svg><div class="a" style="left:966px;top:109px;width:17px;height:608px;background-color:#eeeeea;background-image:linear-gradient(45deg,#cfcdc6 25%,transparent 25%,transparent 75%,#cfcdc6 75%),linear-gradient(45deg,#cfcdc6 25%,transparent 25%,transparent 75%,#cfcdc6 75%);background-size:2px 2px;background-position:0 0,1px 1px;border-left:1px solid #d0d0d0"></div><div class="btn3 a" style="left:966px;top:110px;width:16px;height:15px"></div><div class="a" style="left:970px;top:115px;border:4px solid transparent;border-bottom:4px solid #000;border-top:0"></div><div class="btn3 a" style="left:967px;top:408px;width:15px;height:16px"></div><div class="btn3 a" style="left:967px;top:702px;width:15px;height:14px"></div><div class="a" style="left:971px;top:707px;border:4px solid transparent;border-top:4px solid #000;border-bottom:0"></div><div class="a" style="left:65px;top:717px;width:918px;height:16px;background:#d6d6d6"></div><div class="a" style="left:66px;top:718px;width:57px;height:15px;border:1px solid #404040;background:#fff"></div><div class="t" style="left:68px;top:720px;font-size:10.5px;color:#10104a;letter-spacing:-0.3px">66.67%</div><div class="dd" style="left:107px;top:719px;width:15px;height:13px"></div><div class="a" style="left:124px;top:718px;width:33px;height:15px;background:#d4d0c8"></div><div class="t" style="left:128px;top:719px;font-size:10px;color:#888">|◀&nbsp; ◀</div><div class="a" style="left:157px;top:718px;width:43px;height:15px;border:1px solid #404040;background:#fff"></div><div class="t" style="left:160px;top:720px;font-size:11px;color:#10104a">1</div><div class="dd" style="left:183px;top:719px;width:16px;height:13px"></div><div class="a" style="left:200px;top:718px;width:35px;height:15px;background:#d4d0c8"></div><div class="t" style="left:205px;top:719px;font-size:10px;color:#888">▶&nbsp; ▶|</div><div class="a" style="left:235px;top:719px;width:179px;height:14px;background:#d6d6d6;border:1px solid;border-color:#f8f8f8 #404040 #404040 #f8f8f8"></div><div class="t" style="left:313px;top:720px;font-size:12px;color:#111">文字</div><div class="a" style="left:402px;top:721px;border:5px solid transparent;border-left:6px solid #000;border-right:0"></div><div class="a" style="left:414px;top:717px;width:552px;height:16px;background-color:#eeeeea;background-image:linear-gradient(45deg,#cfcdc6 25%,transparent 25%,transparent 75%,#cfcdc6 75%),linear-gradient(45deg,#cfcdc6 25%,transparent 25%,transparent 75%,#cfcdc6 75%);background-size:2px 2px;background-position:0 0,1px 1px"></div><div class="btn3 a" style="left:414px;top:718px;width:16px;height:15px"></div><div class="a" style="left:419px;top:721px;border:4px solid transparent;border-right:4px solid #000;border-left:0"></div><div class="btn3 a" style="left:682px;top:717px;width:16px;height:16px"></div><div class="btn3 a" style="left:951px;top:718px;width:15px;height:15px"></div><div class="a" style="left:956px;top:721px;border:4px solid transparent;border-left:4px solid #000;border-right:0"></div><div class="a" style="left:966px;top:717px;width:17px;height:16px;background:#fff"></div><div class="a" style="left:0;top:733px;width:1024px;height:5px;background:#e6e6e6;border-top:1px solid #3c3c3c;border-bottom:1px solid #8a8a8a;box-shadow:inset 0 -1px #fafafa"></div><div class="a" style="left:0;top:733px;width:4px;height:4px;background:#e6e6e6;border-left:1px solid #7a7a7a;box-shadow:inset 1px 0 #fafafa"></div><div class="a" style="left:0;top:738px;width:1024px;height:30px;background:#d4d0c8;border-top:2px solid #fff"></div><div class="btn3 a" style="left:2px;top:742px;width:47px;height:22px"></div><svg class="a" style="left:3px;top:744px" width="18" height="16"><g transform="skewY(-8) translate(0 2)"><path d="M2 2Q5 0.5 8.5 2V7.5Q5 6 2 7.5Z" fill="#ea5a28"/><path d="M9.5 2Q13 0.5 16 2V7.5Q13 6 9.5 7.5Z" fill="#6ab82a"/><path d="M2 8.5Q5 7 8.5 8.5V14Q5 12.5 2 14Z" fill="#2a88e8"/><path d="M9.5 8.5Q13 7 16 8.5V14Q13 12.5 9.5 14Z" fill="#f8c818"/></g></svg><div class="t" style="left:22px;top:745px;font-size:13px;color:#000">开始</div><svg class="a" style="left:56px;top:745px" width="66" height="18"><circle cx="8.3" cy="8.3" r="6.6" fill="none" stroke="#2a8ae0" stroke-width="2.6"/><path d="M1.7 8.3A6.6 6.6 0 0 1 8.3 1.7" fill="none" stroke="#e85a20" stroke-width="2.6"/><path d="M8.3 1.7A6.6 6.6 0 0 1 14.9 8.3" fill="none" stroke="#48b030" stroke-width="2.6"/><path d="M14.9 8.3A6.6 6.6 0 0 1 8.3 14.9" fill="none" stroke="#f0c020" stroke-width="2.6"/><circle cx="8.3" cy="8.3" r="4.6" fill="#fff"/><path d="M6.5 5.5L11.3 8.3L6.5 11.1Z" fill="#111"/><path d="M24 4L36 1.5L39 13L27 15.5Z" fill="#2a78d8" stroke="#1a4aa0" stroke-width="0.6"/><path d="M27 5.5L34.5 4L36.5 12L29 13.5Z" fill="#f8f4e0"/><path d="M30 11L36 5" stroke="#1a3a80" stroke-width="1.3"/><circle cx="37.5" cy="4" r="1" fill="#e04020"/><text x="48" y="15" font-size="16" font-weight="bold" fill="#2a80d8" font-family="Liberation Sans">e</text><path d="M46 14Q44 17 49 15Q58 11 62 3Q63 0 59 1.5" fill="none" stroke="#40a0f0" stroke-width="1.3"/></svg><div class="t" style="left:130px;top:745px;font-size:11px;font-weight:bold">»</div><div class="a" style="left:143px;top:742px;width:159px;height:21px;border:1px solid;border-color:#404040 #fff #fff #404040;background-color:#f2f1ee;background-image:linear-gradient(45deg,#d8d6d0 25%,transparent 25%,transparent 75%,#d8d6d0 75%),linear-gradient(45deg,#d8d6d0 25%,transparent 25%,transparent 75%,#d8d6d0 75%);background-size:2px 2px;background-position:0 0,1px 1px"></div><div class="a" style="left:148px;top:745px;width:16px;height:15px;background:linear-gradient(#f8a030,#b85a00);border:1px solid #6a3000"></div><div class="t" style="left:150px;top:748px;font-size:8px;color:#fff">Ai</div><div class="t" style="left:168px;top:746px;font-size:12px;color:#000">未标题<span style="font-family:'Liberation Mono',monospace;font-size:9.7px">-1*&nbsp;@&nbsp;66.67%&nbsp;...</span></div><svg class="a" style="left:957px;top:746px" width="18" height="16"><rect x="1" y="6" width="16" height="8" rx="1" fill="#fff" stroke="#111"/><path d="M3 9h12M3 11.5h12" stroke="#111" stroke-dasharray="1 1"/><path d="M4 6V3h3v2h2V2" stroke="#111" fill="none"/></svg><div class="a" style="left:978px;top:742px;width:1px;height:23px;background:#808080;border-right:1px solid #fff"></div><div class="a" style="left:984px;top:742px;width:37px;height:23px;border:1px solid;border-color:#808080 #fff #fff #808080"></div><div class="t" style="left:989px;top:746px;font-size:12px;font-weight:bold">«</div><svg class="a" style="left:1002px;top:745px" width="18" height="18"><rect x="1" y="4" width="8" height="7" fill="#28307a"/><rect x="2" y="12" width="7" height="3" fill="#9ab0ff"/><path d="M11 3Q13 5 11 7M13 1Q16 5 13 9" stroke="#666" fill="none"/></svg></body></html>
